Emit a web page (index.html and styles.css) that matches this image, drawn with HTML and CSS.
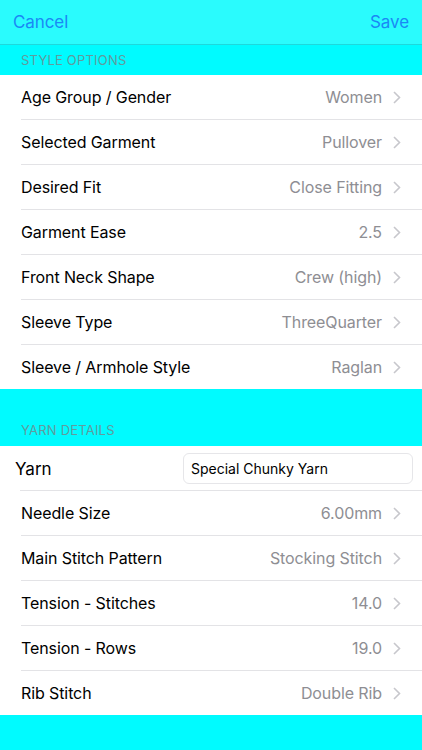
FILE: index.html
```html
<!DOCTYPE html>
<html>
<head>
<meta charset="utf-8">
<link rel="stylesheet" href="styles.css">
</head>
<body>
<div class="screen">
  <div class="navbar">
    <span class="nav-btn">Cancel</span>
    <span class="nav-btn">Save</span>
  </div>
  <div class="section-header">STYLE OPTIONS</div>
  <div class="group">
    <div class="row"><span class="label">Age Group / Gender</span><span class="value">Women</span><span class="chev"><svg width="8" height="13" viewBox="0 0 8 13"><path d="M1 1l5.5 5.5L1 12" fill="none" stroke="#c7c7cc" stroke-width="1.6"/></svg></span></div>
    <div class="row"><span class="label">Selected Garment</span><span class="value">Pullover</span><span class="chev"><svg width="8" height="13" viewBox="0 0 8 13"><path d="M1 1l5.5 5.5L1 12" fill="none" stroke="#c7c7cc" stroke-width="1.6"/></svg></span></div>
    <div class="row"><span class="label">Desired Fit</span><span class="value">Close Fitting</span><span class="chev"><svg width="8" height="13" viewBox="0 0 8 13"><path d="M1 1l5.5 5.5L1 12" fill="none" stroke="#c7c7cc" stroke-width="1.6"/></svg></span></div>
    <div class="row"><span class="label">Garment Ease</span><span class="value">2.5</span><span class="chev"><svg width="8" height="13" viewBox="0 0 8 13"><path d="M1 1l5.5 5.5L1 12" fill="none" stroke="#c7c7cc" stroke-width="1.6"/></svg></span></div>
    <div class="row"><span class="label">Front Neck Shape</span><span class="value">Crew (high)</span><span class="chev"><svg width="8" height="13" viewBox="0 0 8 13"><path d="M1 1l5.5 5.5L1 12" fill="none" stroke="#c7c7cc" stroke-width="1.6"/></svg></span></div>
    <div class="row"><span class="label">Sleeve Type</span><span class="value">ThreeQuarter</span><span class="chev"><svg width="8" height="13" viewBox="0 0 8 13"><path d="M1 1l5.5 5.5L1 12" fill="none" stroke="#c7c7cc" stroke-width="1.6"/></svg></span></div>
    <div class="row last"><span class="label">Sleeve / Armhole Style</span><span class="value">Raglan</span><span class="chev"><svg width="8" height="13" viewBox="0 0 8 13"><path d="M1 1l5.5 5.5L1 12" fill="none" stroke="#c7c7cc" stroke-width="1.6"/></svg></span></div>
  </div>
  <div class="section-header tall">YARN DETAILS</div>
  <div class="group">
    <div class="row yarn-row"><span class="yarn-label">Yarn</span><div class="yarn-input">Special Chunky Yarn</div></div>
    <div class="row"><span class="label">Needle Size</span><span class="value">6.00mm</span><span class="chev"><svg width="8" height="13" viewBox="0 0 8 13"><path d="M1 1l5.5 5.5L1 12" fill="none" stroke="#c7c7cc" stroke-width="1.6"/></svg></span></div>
    <div class="row"><span class="label">Main Stitch Pattern</span><span class="value">Stocking Stitch</span><span class="chev"><svg width="8" height="13" viewBox="0 0 8 13"><path d="M1 1l5.5 5.5L1 12" fill="none" stroke="#c7c7cc" stroke-width="1.6"/></svg></span></div>
    <div class="row"><span class="label">Tension - Stitches</span><span class="value">14.0</span><span class="chev"><svg width="8" height="13" viewBox="0 0 8 13"><path d="M1 1l5.5 5.5L1 12" fill="none" stroke="#c7c7cc" stroke-width="1.6"/></svg></span></div>
    <div class="row"><span class="label">Tension - Rows</span><span class="value">19.0</span><span class="chev"><svg width="8" height="13" viewBox="0 0 8 13"><path d="M1 1l5.5 5.5L1 12" fill="none" stroke="#c7c7cc" stroke-width="1.6"/></svg></span></div>
    <div class="row last"><span class="label">Rib Stitch</span><span class="value">Double Rib</span><span class="chev"><svg width="8" height="13" viewBox="0 0 8 13"><path d="M1 1l5.5 5.5L1 12" fill="none" stroke="#c7c7cc" stroke-width="1.6"/></svg></span></div>
  </div>
  <div class="footer"></div>
</div>
</body>
</html>
```

FILE: styles.css
```css
* { box-sizing: border-box; }
html, body { margin: 0; padding: 0; }
body {
  font-family: "Inter", "Liberation Sans", sans-serif;
  background: #00fbff;
  width: 422px;
  height: 750px;
  overflow: hidden;
}
.screen { display: flex; flex-direction: column; }
.navbar {
  height: 45px;
  background: #2afbfd;
  border-bottom: 1px solid #1ed8dc;
  display: flex;
  justify-content: space-between;
  align-items: center;
  padding: 0 13px 0 13px;
}
.nav-btn {
  color: #1a88f5;
  font-size: 17px;
  letter-spacing: -0.1px;
}
.section-header {
  height: 30px;
  background: #00fbff;
  color: #5f9c9e;
  font-size: 13px;
  padding: 0 21px;
  display: flex;
  align-items: center;
  letter-spacing: 0.2px;
}
.section-header.tall {
  height: 57px;
  align-items: flex-end;
  padding-bottom: 8px;
}
.group { background: #fff; }
.row {
  height: 45px;
  display: flex;
  align-items: center;
  margin-left: 21px;
  padding-right: 21px;
  border-bottom: 1px solid #e3e3e6;
}
.row.last { border-bottom: none; height: 44px; }
.label {
  flex: 1;
  color: #000;
  font-size: 16px;
  letter-spacing: -0.1px;
}
.value {
  color: #8e8e93;
  font-size: 16px;
  letter-spacing: -0.1px;
}
.chev {
  width: 8px;
  margin-left: 11px;
  display: flex;
  align-items: center;
}
.yarn-row { margin-left: 0; padding-left: 15px; padding-right: 9px; }
.yarn-row { position: relative; border-bottom: none; }
.yarn-row::after {
  content: "";
  position: absolute;
  left: 20px; right: 0; bottom: 0;
  border-bottom: 1px solid #e3e3e6;
}
.yarn-label {
  flex: 1;
  font-size: 17px;
  color: #000;
}
.yarn-input {
  width: 230px;
  height: 31px;
  border: 1px solid #e6e6e9;
  border-radius: 6px;
  padding: 0 7px;
  display: flex;
  align-items: center;
  font-size: 14px;
  color: #000;
}
.footer { flex: 1; background: #00fbff; }
```
